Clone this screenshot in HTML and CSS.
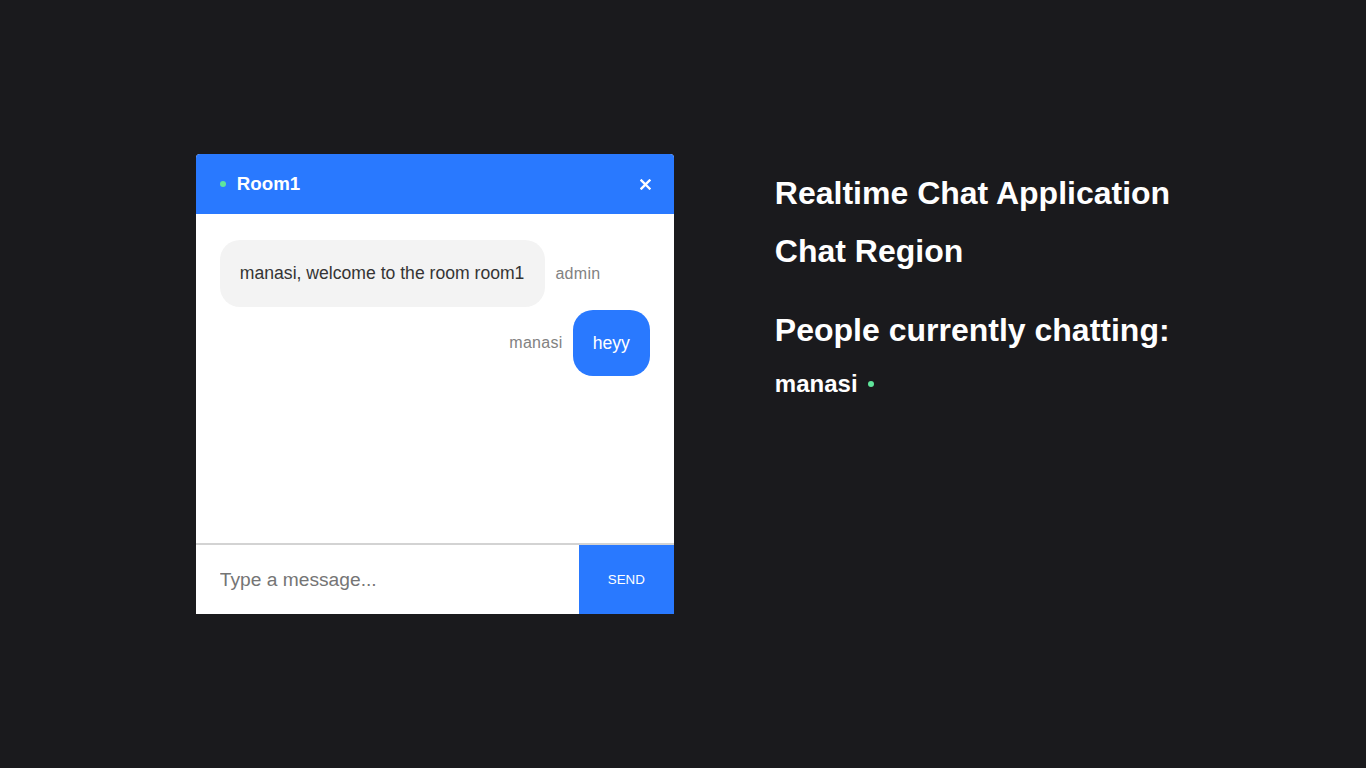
FILE: index.html
```html
<!DOCTYPE html>
<html>
<head>
<meta charset="utf-8">
<link rel="stylesheet" href="styles.css">
</head>
<body>
<div class="outer">
  <div class="row">
    <div class="chat">
      <div class="infobar">
        <div class="info-left">
          <span class="dot"></span>
          <h3 class="room">Room1</h3>
        </div>
        <div class="info-right">
          <svg class="close" width="11" height="11" viewBox="0 0 11 11"><path d="M1.5 1.5 L9.5 9.5 M9.5 1.5 L1.5 9.5" stroke="#fff" stroke-width="2.4" stroke-linecap="square"/></svg>
        </div>
      </div>
      <div class="messages">
        <div class="msg start">
          <div class="bubble light"><p class="text dark">manasi, welcome to the room room1</p></div>
          <p class="sender pl">admin</p>
        </div>
        <div class="msg end">
          <p class="sender pr">manasi</p>
          <div class="bubble blue"><p class="text white">heyy</p></div>
        </div>
      </div>
      <form class="form">
        <input class="input" type="text" placeholder="Type a message..." autofocus>
        <button class="send" type="button">Send</button>
      </form>
    </div>
    <div class="side">
      <h1 class="title">Realtime Chat Application</h1>
      <h1 class="title">Chat Region</h1>
      <div class="people">
        <h1 class="title">People currently chatting:</h1>
        <h2 class="user">manasi <span class="dot small"></span></h2>
      </div>
    </div>
  </div>
</div>
</body>
</html>
```
FILE: styles.css
```css
html, body {
  margin: 0;
  padding: 0;
  font-family: "Liberation Sans", Arial, sans-serif;
}
.outer {
  display: flex;
  justify-content: center;
  align-items: center;
  height: 100vh;
  background: #1a1a1d;
}
.row {
  display: flex;
  align-items: flex-start;
}
.chat {
  display: flex;
  flex-direction: column;
  justify-content: space-between;
  background: #fff;
  border-radius: 4px 4px 0 0;
  width: 478px;
  height: 460px;
}
.infobar {
  display: flex;
  align-items: center;
  justify-content: space-between;
  background: #2979ff;
  border-radius: 4px 4px 0 0;
  height: 60px;
  flex: none;
}
.info-left {
  display: flex;
  align-items: center;
  margin-left: 24px;
  color: #fff;
}
.dot {
  display: inline-block;
  width: 6px;
  height: 6px;
  border-radius: 50%;
  background: #5fe59b;
  margin-right: 11px;
}
.room {
  margin: 0;
  font-size: 18.72px;
  font-weight: bold;
}
.info-right {
  display: flex;
  margin-right: 23px;
  padding-top: 1px;
}
.messages {
  flex: auto;
  padding: 26px 24px 0;
}
.msg {
  display: flex;
  margin-bottom: 3px;
}
.msg.start { justify-content: flex-start; }
.msg.end { justify-content: flex-end; }
.bubble {
  border-radius: 20px;
  padding: 0 20px;
  display: inline-block;
}
.bubble.light { background: #f3f3f3; height: 67px; padding-right: 21px; }
.bubble.blue { background: #2979ff; height: 66px; }
.text {
  margin: 0;
  font-size: 17.6px;
  line-height: 66px;
}
.dark { color: #353535; }
.white { color: #fff; }
.sender {
  display: flex;
  align-items: center;
  margin: 0;
  color: #828282;
  letter-spacing: 0.3px;
  font-size: 16px;
}
.pl { padding-left: 10px; }
.pr { padding-right: 10px; }
.form {
  display: flex;
  border-top: 2px solid #d3d3d3;
  margin: 0;
  height: 69px;
  flex: none;
}
.input {
  border: none;
  border-radius: 0;
  padding: 0 0 0 24px;
  flex: 1;
  min-width: 0;
  font-size: 19.2px;
  font-family: "Liberation Sans", Arial, sans-serif;
  outline: none;
  color: #353535;
  background: #fff;
}
.input::placeholder { color: #757575; }
.send {
  color: #fff;
  text-transform: uppercase;
  background: #2979ff;
  border: none;
  width: 95px;
  font-size: 13.33px;
  font-family: "Liberation Sans", Arial, sans-serif;
  padding: 0;
}
.side {
  margin-left: 101px;
  color: #fff;
}
.title {
  font-size: 32px;
  font-weight: bold;
  margin: 21px 0 21px;
  line-height: 37px;
}
.side > .title:first-child { margin-top: 21px; }
.people { margin-top: 42px; }
.user {
  font-size: 24px;
  margin: 0;
  line-height: 28px;
  display: flex;
  align-items: center;
}
.dot.small {
  margin-left: 10px;
  margin-right: 0;
}
```
